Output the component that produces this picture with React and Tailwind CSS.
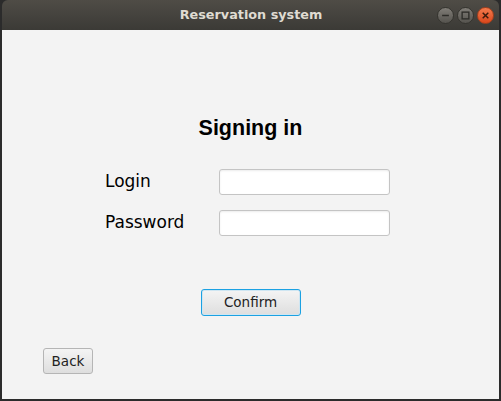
import React from "react";

const TitleButton = ({ kind }) => {
    const isClose = kind === "close";
    return (
        <div
            className={
                "w-[17px] h-[17px] rounded-full flex items-center justify-center border " +
                (isClose
                    ? "bg-gradient-to-b from-[#f37a4c] to-[#d9461a] border-[#a8401c]"
                    : "bg-gradient-to-b from-[#807d77] to-[#55534e] border-[#35342f]")
            }
        >
            <svg width="9" height="9" viewBox="0 0 8 8">
                {kind === "min" && <line x1="1" y1="4" x2="7" y2="4" stroke="#2d2c28" strokeWidth="1.3" />}
                {kind === "max" && <rect x="1" y="1" width="6" height="6" fill="none" stroke="#2d2c28" strokeWidth="1.2" />}
                {isClose && (
                    <g stroke="#3a1a0c" strokeWidth="1.3">
                        <line x1="1.5" y1="1.5" x2="6.5" y2="6.5" />
                        <line x1="6.5" y1="1.5" x2="1.5" y2="6.5" />
                    </g>
                )}
            </svg>
        </div>
    );
};

const App = () => {
    return (
        <div className="w-[501px] h-[401px] bg-[#2b2b2b] pl-[2px] overflow-hidden">
            <div className="w-[497px] h-[399px] flex flex-col rounded-t-[6px] overflow-hidden">
                {/* Title bar */}
                <div className="h-[30px] shrink-0 flex items-center bg-gradient-to-b from-[#4f4c46] to-[#3b3a36] relative">
                    <div className="flex-1 text-center text-[12.8px] font-bold text-[#dfdbd2] font-['DejaVu_Sans',sans-serif] pl-[1px]">
                        Reservation system
                    </div>
                    <div className="absolute right-[5px] top-[7px] flex gap-[3px]">
                        <TitleButton kind="min" />
                        <TitleButton kind="max" />
                        <TitleButton kind="close" />
                    </div>
                </div>

                {/* Content */}
                <div className="flex-1 bg-[#f3f3f3] flex flex-col font-['DejaVu_Sans',sans-serif]">
                    <h1 className="mt-[86px] h-6 leading-6 text-center text-[21.5px] font-bold text-black font-['Liberation_Sans',sans-serif]">
                        Signing in
                    </h1>

                    <div className="mt-[29px] ml-[103px] grid grid-cols-[114px_171px] gap-y-[15px] items-center">
                        <label className="text-[17px] text-black">Login</label>
                        <input className="h-[26px] bg-white border border-[#c4c4c4] rounded-[3px] shadow-[inset_0_1px_2px_rgba(0,0,0,0.08)] outline-none" />
                        <label className="text-[17px] text-black">Password</label>
                        <input
                            type="password"
                            className="h-[26px] bg-white border border-[#c4c4c4] rounded-[3px] shadow-[inset_0_1px_2px_rgba(0,0,0,0.08)] outline-none"
                        />
                    </div>

                    <button className="mt-[53px] self-center w-[100px] h-[27px] rounded-[3px] border border-[#1ba1e2] shadow-[inset_0_0_0_1px_#cfe6f2] bg-gradient-to-b from-[#f4f4f4] to-[#dedede] text-[13.5px] text-[#222]">
                        Confirm
                    </button>

                    <button className="mt-[32px] ml-[41px] self-start w-[50px] h-[26px] rounded-[3px] border border-[#b5b5b5] bg-gradient-to-b from-[#f4f4f4] to-[#dedede] text-[13.5px] text-[#222]">
                        Back
                    </button>
                </div>
            </div>
        </div>
    );
};

export default App;
